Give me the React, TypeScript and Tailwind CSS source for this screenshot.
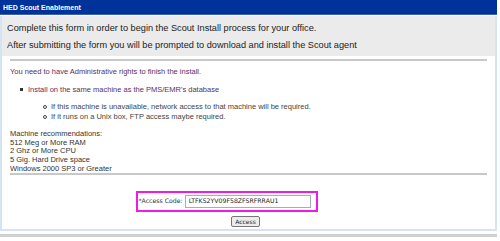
export default function App() {
  return (
    <div className="w-[500px] h-[241px] bg-white font-['Liberation_Sans',Arial,sans-serif] overflow-hidden">
      <div className="w-[497px]">
        <div className="h-[15px] bg-[#003399] border-b border-[#3a5fb8] flex items-center px-[3px]">
          <span className="text-[7px] font-bold text-white leading-none">HED Scout Enablement</span>
        </div>
        <div className="mt-[1px] border-x-2 border-b-2 border-[#d6e3f3]">
          <div className="h-[40px] bg-[#ebebeb] px-[5px] pt-[6px] flex flex-col gap-[5px] text-[9.2px] leading-[12px] text-[#222]">
            <p>Complete this form in order to begin the Scout Install process for your office.</p>
            <p>After submitting the form you will be prompted to download and install the Scout agent</p>
          </div>
          <div className="bg-white px-[8px] pt-[3px] pb-[2px] text-[7.5px] leading-[8.6px]">
            <div className="h-[2px] bg-[#c8c8c8]" />
            <p className="mt-[7px] text-[#5b2f66]">You need to have Administrative rights to finish the install.</p>
            <ul className="mt-[9px] pl-[10px] text-[#5b2f66]">
              <li className="flex items-center gap-[5px]">
                <span className="w-[3px] h-[3px] bg-[#333]" />
                Install on the same machine as the PMS/EMR's database
              </li>
            </ul>
            <ul className="mt-[8px] pl-[33px] text-[#444]">
              <li className="flex items-center gap-[4px] leading-[10px]">
                <span className="w-[4px] h-[4px] rounded-full border border-[#444]" />
                If this machine is unavailable, network access to that machine will be required.
              </li>
              <li className="flex items-center gap-[4px] leading-[10px]">
                <span className="w-[4px] h-[4px] rounded-full border border-[#444]" />
                If it runs on a Unix box, FTP access maybe required.
              </li>
            </ul>
            <div className="mt-[8px] text-[#333]">
              <p>Machine recommendations:</p>
              <p>512 Meg or More RAM</p>
              <p>2 Ghz or More CPU</p>
              <p>5 Gig. Hard Drive space</p>
              <p>Windows 2000 SP3 or Greater</p>
            </div>
            <div className="mt-[0px] h-[2px] bg-[#c8c8c8]" />
            <div className="flex flex-col items-center pt-[16px]">
              <div className="ml-[-44px] w-[182px] h-[21px] border-2 border-[#ee1ae8] flex items-center px-[1px] gap-[2px] font-['DejaVu_Sans',Tahoma,sans-serif] text-[6.2px] text-[#333] whitespace-nowrap">
                <span>*Access Code:</span>
                <div className="w-[126px] h-[13px] border border-[#aab] bg-white flex items-center px-[3px] text-[#222]">
                  LTFKS2YV09F58ZFSRFRRAU1
                </div>
              </div>
              <button className="mt-[4px] ml-[-6px] h-[11px] px-[3px] border border-[#777] rounded-[2px] bg-[#ececec] text-[6px] leading-none font-['DejaVu_Sans',Tahoma,sans-serif] text-[#222]">
                Access
              </button>
            </div>
          </div>
        </div>
        <div className="mt-[3px] h-[3px] bg-[#d0d0d0]" />
      </div>
    </div>
  );
}
